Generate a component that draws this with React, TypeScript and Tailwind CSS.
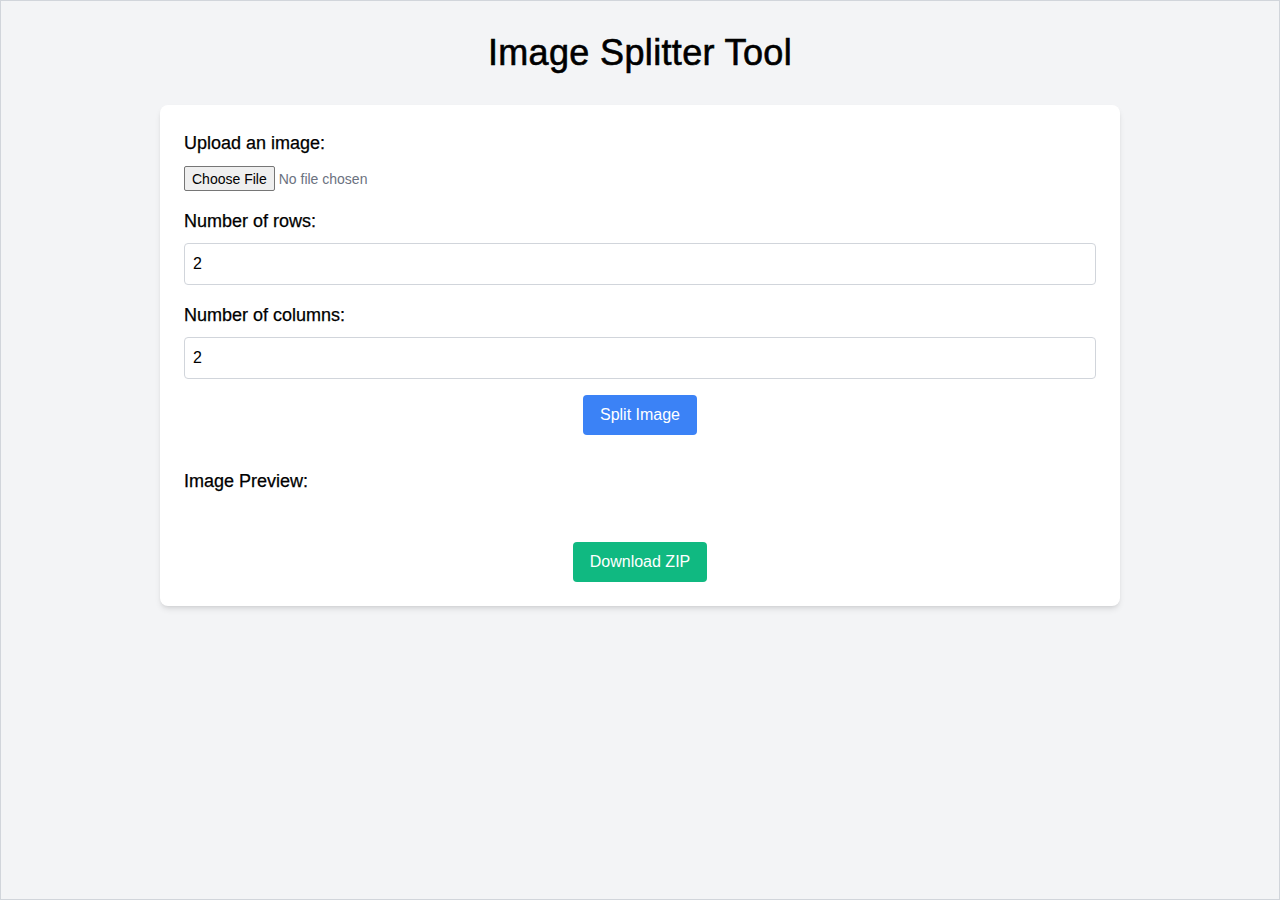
import React from "react";

export default function App() {
  return (
    <div
      className="min-h-[900px] bg-[#f3f4f6] border border-[#d1d5db] p-8 text-black"
      style={{ fontFamily: '"Liberation Sans", Arial, sans-serif' }}
    >
      <h1 className="text-4xl leading-10 text-center mb-8 font-normal tracking-[0.35px] [-webkit-text-stroke:0.6px_black]">
        Image Splitter Tool
      </h1>
      <div className="max-w-[960px] mx-auto bg-white rounded-lg shadow-md p-6">
        <label className="block text-lg leading-7 mb-2 [-webkit-text-stroke:0.25px_black]">Upload an image:</label>
        <input
          type="file"
          accept="image/*"
          className="block h-[26px] text-sm leading-5 text-[#6b7280] file:h-[25px] file:mt-px file:mr-[4px] file:px-[7px] file:bg-[#efefef] file:text-black file:border file:border-solid file:border-[#767676] file:rounded-[2px] file:text-sm"
        />
        <label className="block text-lg leading-7 mt-4 mb-2 [-webkit-text-stroke:0.25px_black]">Number of rows:</label>
        <input
          type="number"
          defaultValue={2}
          className="block w-full border border-[#d1d5db] rounded px-2 py-2 text-base leading-6 outline-none"
        />
        <label className="block text-lg leading-7 mt-4 mb-2 [-webkit-text-stroke:0.25px_black]">Number of columns:</label>
        <input
          type="number"
          defaultValue={2}
          className="block w-full border border-[#d1d5db] rounded px-2 py-2 text-base leading-6 outline-none"
        />
        <div className="flex justify-center mt-4">
          <button className="bg-[#3b82f6] text-white rounded px-[17px] py-2 text-base leading-6">Split Image</button>
        </div>
        <h2 className="text-lg leading-7 mt-8 [-webkit-text-stroke:0.25px_black]">Image Preview:</h2>
        <div className="h-[47px]"></div>
        <div className="flex justify-center">
          <button className="bg-[#10b981] text-white rounded px-[17px] py-2 text-base leading-6">Download ZIP</button>
        </div>
      </div>
    </div>
  );
}
